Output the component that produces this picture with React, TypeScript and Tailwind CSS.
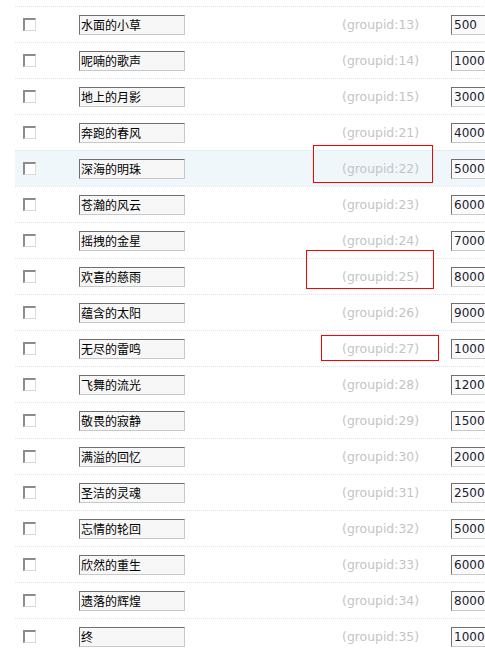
import React from "react";

const rows: [string, number, string][] = [
  ["水面的小草", 13, "500"],
  ["呢喃的歌声", 14, "1000"],
  ["地上的月影", 15, "3000"],
  ["奔跑的春风", 21, "4000"],
  ["深海的明珠", 22, "5000"],
  ["苍瀚的风云", 23, "6000"],
  ["摇拽的金星", 24, "7000"],
  ["欢喜的慈雨", 25, "8000"],
  ["蕴含的太阳", 26, "9000"],
  ["无尽的雷鸣", 27, "1000"],
  ["飞舞的流光", 28, "1200"],
  ["敬畏的寂静", 29, "1500"],
  ["满溢的回忆", 30, "2000"],
  ["圣洁的灵魂", 31, "2500"],
  ["忘情的轮回", 32, "5000"],
  ["欣然的重生", 33, "6000"],
  ["遗落的辉煌", 34, "8000"],
  ["终", 35, "1000"],
];

export default function App() {
  return (
    <div className="relative w-[485px] h-[654px] overflow-hidden bg-white">
      <div className="pt-[6px] pl-[15px] w-[600px]">
        {rows.map(([name, gid, val], i) => (
          <div
            key={gid}
            className={
              "flex items-center h-[36px] border-t border-dotted border-[#d4e6f2] " +
              (i === 4 ? "bg-[#f0f7fb]" : "")
            }
          >
            <div className="ml-[8px] w-[13px] h-[13px] bg-white border-t-2 border-l-2 border-r border-b border-t-[#8c8c8c] border-l-[#8c8c8c] border-r-[#dadada] border-b-[#dadada]" />
            <div
              className="ml-[43px] w-[106px] h-[20px] bg-[#f7f7f7] border border-t-[#707070] border-l-[#707070] border-r-[#c8c8c8] border-b-[#c8c8c8] pl-[1px] text-[12px] leading-[18px] text-black whitespace-nowrap"
              style={{ fontFamily: '"Noto Sans CJK SC", sans-serif' }}
            >
              {name}
            </div>
            <div
              className="w-[234px] text-right text-[12.4px] text-[#c4c4c4] whitespace-nowrap pt-[2px]"
              style={{ fontFamily: '"DejaVu Sans", Verdana, sans-serif' }}
            >
              (groupid:{gid})
            </div>
            <div
              className="ml-[32px] w-[80px] h-[20px] bg-[#fafafa] border border-t-[#707070] border-l-[#707070] border-r-[#c8c8c8] border-b-[#c8c8c8] pl-[2px] text-[12px] leading-[18px] text-[#1a1a2e] whitespace-nowrap"
              style={{ fontFamily: '"DejaVu Sans", Verdana, sans-serif' }}
            >
              {val}
            </div>
          </div>
        ))}
      </div>
      <div className="absolute left-[313px] top-[145px] w-[120px] h-[38px] border border-[#ff0000]" />
      <div className="absolute left-[306px] top-[250px] w-[128px] h-[39px] border border-[#ff0000]" />
      <div className="absolute left-[321px] top-[335px] w-[118px] h-[26px] border border-[#ff0000]" />
    </div>
  );
}
